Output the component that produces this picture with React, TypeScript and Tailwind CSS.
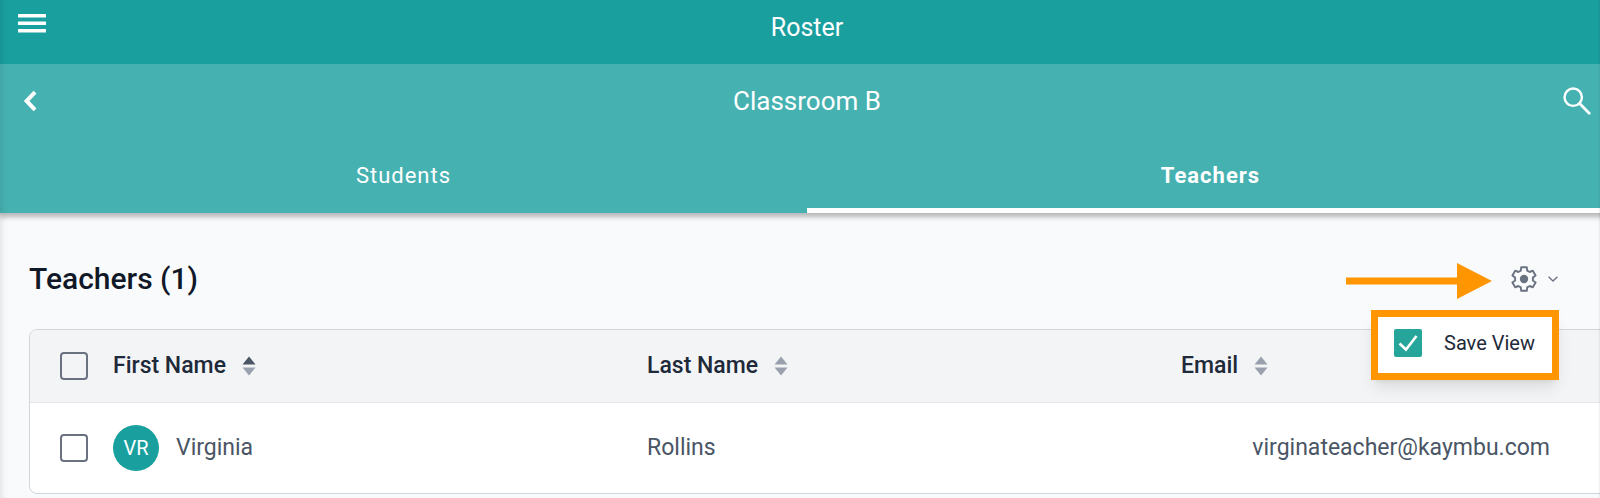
import type { ReactNode } from 'react';

const columns = [
  { label: 'First Name', sorted: true },
  { label: 'Last Name', sorted: false },
  { label: 'Email', sorted: false },
];

const teachers = [
  {
    initials: 'VR',
    firstName: 'Virginia',
    lastName: 'Rollins',
    email: 'virginateacher@kaymbu.com',
  },
];

function MenuIcon() {
  return (
    <svg width="28" height="20" viewBox="0 0 28 20" fill="currentColor" aria-hidden="true">
      <rect y="0" width="28" height="3.5" rx="0.5" />
      <rect y="7.5" width="28" height="3.5" rx="0.5" />
      <rect y="15" width="28" height="3.5" rx="0.5" />
    </svg>
  );
}

function BackIcon() {
  return (
    <svg width="14" height="22" viewBox="0 0 14 22" fill="none" aria-hidden="true">
      <path d="M12 2.200 3.600 11l8.400 8.800" stroke="currentColor" strokeWidth="4" />
    </svg>
  );
}

function SearchIcon() {
  return (
    <svg width="28" height="28" viewBox="0 0 28 28" fill="none" stroke="currentColor" aria-hidden="true">
      <circle cx="10.2" cy="10.2" r="8.7" strokeWidth="2.4" />
      <path d="M16.6 16.6 26.2 26.2" strokeWidth="2.8" strokeLinecap="round" />
    </svg>
  );
}

function GearIcon() {
  return (
    <svg width="26" height="26" viewBox="0 0 26 26" fill="none" aria-hidden="true">
      <path
        d="M10.2 1.2H15.8L16.2 4.6 18.7 6 21.8 4.7 24.6 9.5 21.9 11.6V14.4L24.6 16.5 21.8 21.3 18.7 20 16.2 21.4 15.8 24.8H10.2L9.8 21.4 7.3 20 4.2 21.3 1.4 16.5 4.1 14.4V11.6L1.4 9.500 4.2 4.7 7.3 6 9.8 4.6z"
        stroke="currentColor"
        strokeWidth="1.9"
        strokeLinejoin="round"
      />
      <circle cx="13" cy="13" r="4.2" fill="currentColor" />
    </svg>
  );
}

function ChevronIcon() {
  return (
    <svg width="10" height="6" viewBox="0 0 10 6" fill="none" aria-hidden="true">
      <path d="M.6.8 5 5 9.4.8" stroke="currentColor" strokeWidth="1.3" />
    </svg>
  );
}

function SortIcon({ sorted }: { sorted: boolean }) {
  return (
    <svg width="14" height="20" viewBox="0 0 14 20" aria-hidden="true">
      <path d="M7 .5 13.5 8.5H.5z" className={sorted ? 'fill-gray-600' : 'fill-gray-400'} />
      <path d="M7 19.5.5 11.5h13z" className="fill-gray-400" />
    </svg>
  );
}

function Tab({ active, children }: { active?: boolean; children: ReactNode }) {
  return (
    <button
      type="button"
      role="tab"
      aria-selected={!!active}
      className={
        active
          ? 'flex-1 border-b-[5px] border-white pt-1 text-[22px] font-bold tracking-[1px]'
          : 'flex-1 border-b-[5px] border-transparent pt-1 text-[22px] tracking-[1px]'
      }
    >
      {children}
    </button>
  );
}

function RowCheckbox({ label }: { label: string }) {
  return (
    <input
      type="checkbox"
      aria-label={label}
      className="block size-7 appearance-none rounded-sm border-2 border-gray-500"
    />
  );
}

function PageHeader() {
  return (
    <header className="relative z-10 text-white shadow-[0_3px_5px_1px_rgba(0,0,0,0.27)]">
      <div className="grid h-16 grid-cols-[1fr_auto_1fr] bg-[#1a9f9f] px-[18px]">
        <button type="button" aria-label="Menu" className="mt-3.5 self-start justify-self-start">
          <MenuIcon />
        </button>
        <h1 className="pt-[9px] text-[25px]">Roster</h1>
      </div>

      <div className="bg-[#46b1b1]">
        <div className="grid h-[74px] grid-cols-[1fr_auto_1fr] items-center px-[23px]">
          <button type="button" aria-label="Back" className="justify-self-start">
            <BackIcon />
          </button>
          <h2 className="text-[26px]">Classroom B</h2>
          <button type="button" aria-label="Search" className="justify-self-end">
            <SearchIcon />
          </button>
        </div>
        <div role="tablist" className="flex h-[75px]">
          <Tab>Students</Tab>
          <Tab active>Teachers</Tab>
        </div>
      </div>
    </header>
  );
}

function ViewSettings() {
  return (
    <div className="relative flex items-center">
      <svg width="146" height="36" viewBox="0 0 146 36" className="mt-1 mr-[19px] fill-[#ff9500]" aria-hidden="true">
        <path d="M0 14.5h111V0l35 18-35 18V21.500H0z" />
      </svg>
      <button type="button" aria-label="View settings" className="flex items-center gap-[11px] text-gray-500">
        <GearIcon />
        <ChevronIcon />
      </button>
      <label className="absolute top-[51px] -right-px flex w-[188px] gap-[22px] border-[7px] border-[#ff9500] bg-white px-4 pt-3 pb-4 text-xl text-gray-800 shadow-lg">
        <span className="relative">
          <input
            type="checkbox"
            defaultChecked
            className="block size-7 appearance-none rounded-xs bg-[#26a69a]"
          />
          <svg width="28" height="28" viewBox="0 0 28 28" fill="none" className="absolute inset-0" aria-hidden="true">
            <path d="M5.500 14.500 12 20.500 22.500 7" stroke="white" strokeWidth="2.600" />
          </svg>
        </span>
        <span className="whitespace-nowrap">Save View</span>
      </label>
    </div>
  );
}

function TeachersTable() {
  return (
    <div className="overflow-hidden rounded-lg border border-gray-300 bg-white">
      <table className="w-full table-fixed text-left text-[23px]">
        <colgroup>
          <col className="w-[83px]" />
          <col className="w-[534px]" />
          <col className="w-[534px]" />
          <col />
        </colgroup>
        <thead className="bg-gray-100 text-gray-800">
          <tr className="h-[72px] border-b border-gray-200">
            <th className="pl-[30px]">
              <RowCheckbox label="Select all teachers" />
            </th>
            {columns.map((column) => (
              <th key={column.label} className="font-medium">
                <button type="button" className="flex items-center gap-4">
                  {column.label}
                  <SortIcon sorted={column.sorted} />
                </button>
              </th>
            ))}
          </tr>
        </thead>
        <tbody className="text-gray-600">
          {teachers.map((teacher) => (
            <tr key={teacher.email} className="h-[91px]">
              <td className="pl-[30px]">
                <RowCheckbox label={`Select ${teacher.firstName} ${teacher.lastName}`} />
              </td>
              <td>
                <div className="flex items-center gap-[17px]">
                  <span className="grid size-[46px] place-items-center rounded-full bg-[#1a9f9f] text-xl text-white">
                    {teacher.initials}
                  </span>
                  {teacher.firstName}
                </div>
              </td>
              <td>{teacher.lastName}</td>
              <td className="pr-[71px] text-right">{teacher.email}</td>
            </tr>
          ))}
        </tbody>
      </table>
    </div>
  );
}

export default function App() {
  return (
    <div className="relative min-h-screen overflow-hidden bg-[#f9fafc] font-[Roboto,sans-serif]">
      {/* the page runs slightly past the right edge of the window */}
      <div className="-mr-3.5">
        <PageHeader />
        <main className="pl-[29px]">
          <div className="flex h-[116px] items-center justify-between pt-4 pr-14">
            <h2 className="text-3xl font-medium text-gray-900">Teachers (1)</h2>
            <ViewSettings />
          </div>
          <div className="-mr-2">
            <TeachersTable />
          </div>
        </main>
      </div>
      <div className="pointer-events-none absolute inset-0 z-20 shadow-[inset_8px_0_8px_-8px_rgba(0,0,0,0.15),inset_-2px_0_2px_-1px_rgba(0,0,0,0.08)]" />
    </div>
  );
}
